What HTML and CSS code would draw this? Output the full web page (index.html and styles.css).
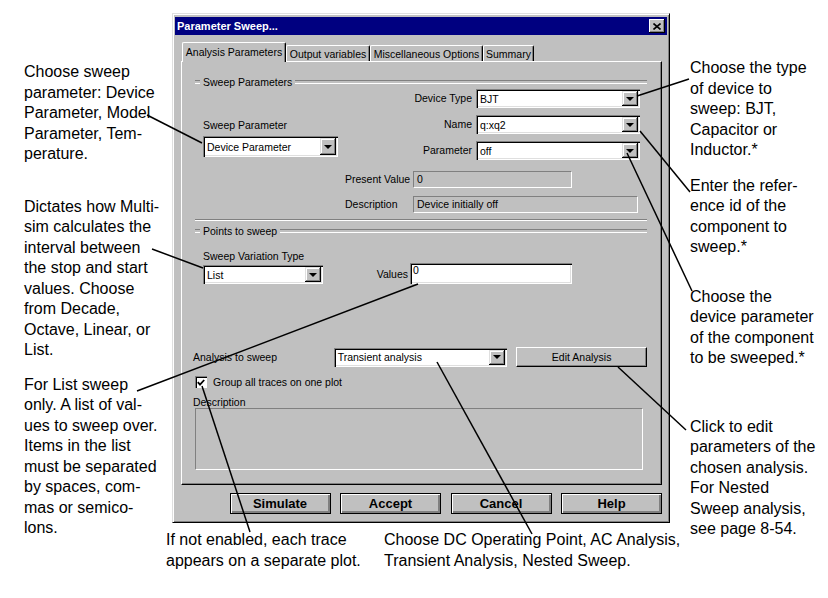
FILE: index.html
```html
<!DOCTYPE html>
<html lang="en">

<head>
    <meta charset="UTF-8">
    <title>Parameter Sweep</title>
    <link rel="stylesheet" href="styles.css">
</head>

<body>
    <div class="sheet">
        <div class="notes notes-left">
            <p class="note note-sweep">Choose sweep<br>parameter: Device<br>Parameter, Model<br>Parameter, Tem-<br>perature.</p>
            <p class="note note-dictates">Dictates how Multi-<br>sim calculates the<br>interval between<br>the stop and start<br>values. Choose<br>from Decade,<br>Octave, Linear, or<br>List.</p>
            <p class="note note-list">For List sweep<br>only. A list of val-<br>ues to sweep over.<br>Items in the list<br>must be separated<br>by spaces, com-<br>mas or semico-<br>lons.</p>
        </div>

        <div class="middle">
            <div class="dialog">
                <div class="titlebar">
                    <span>Parameter Sweep...</span>
                    <span class="close">
                        <svg width="8" height="7" viewBox="0 0 8 7">
                            <path d="M0.5 0.5 L7.5 6.5 M7.5 0.5 L0.5 6.5" stroke="#000" stroke-width="1.6" fill="none"/>
                        </svg>
                    </span>
                </div>

                <div class="tabs">
                    <div class="tab tab-analysis active">Analysis Parameters</div>
                    <div class="tab tab-output">Output variables</div>
                    <div class="tab tab-misc">Miscellaneous Options</div>
                    <div class="tab tab-summary">Summary</div>
                </div>

                <div class="panel">
                    <div class="group-head first"><span>Sweep Parameters</span></div>

                    <div class="sweep-top">
                        <div class="sweep-left">
                            <div class="lbl">Sweep Parameter</div>
                            <div class="combo combo-param"><span>Device Parameter</span><i class="arrow"></i></div>
                        </div>
                        <div class="sweep-right">
                            <span class="lbl">Device Type</span>
                            <div class="combo"><span>BJT</span><i class="arrow"></i></div>
                            <span class="lbl">Name</span>
                            <div class="combo"><span>q:xq2</span><i class="arrow"></i></div>
                            <span class="lbl">Parameter</span>
                            <div class="combo"><span>off</span><i class="arrow"></i></div>
                        </div>
                    </div>

                    <div class="readouts">
                        <span class="lbl">Present Value</span>
                        <div class="readout readout-short">0</div>
                        <span class="lbl">Description</span>
                        <div class="readout readout-long">Device initially off</div>
                    </div>

                    <div class="sep"></div>
                    <div class="group-head second"><span>Points to sweep</span></div>

                    <div class="points">
                        <div class="points-left">
                            <div class="lbl">Sweep Variation Type</div>
                            <div class="combo combo-list"><span>List</span><i class="arrow"></i></div>
                        </div>
                        <span class="lbl values-lbl">Values</span>
                        <div class="field">0</div>
                    </div>

                    <div class="analysis">
                        <div class="analysis-row">
                            <span class="lbl analysis-lbl">Analysis to sweep</span>
                            <div class="combo combo-analysis"><span>Transient analysis</span><i class="arrow"></i></div>
                            <div class="btn-edit">Edit Analysis</div>
                        </div>
                        <div class="check-row">
                            <span class="check">
                                <svg width="8" height="7" viewBox="0 0 8 7">
                                    <path d="M0.8 3.2 L3 5.6 L7.2 1" stroke="#000" stroke-width="1.8" fill="none"/>
                                </svg>
                            </span>
                            <span class="lbl">Group all traces on one plot</span>
                        </div>
                        <div class="lbl desc-lbl">Description</div>
                        <div class="desc-box"></div>
                    </div>
                </div>

                <div class="actions">
                    <div class="btn">Simulate</div>
                    <div class="btn">Accept</div>
                    <div class="btn">Cancel</div>
                    <div class="btn">Help</div>
                </div>
            </div>

            <div class="captions">
                <p class="note caption-trace">If not enabled, each trace<br>appears on a separate plot.</p>
                <p class="note">Choose DC Operating Point, AC Analysis,<br>Transient Analysis, Nested Sweep.</p>
            </div>
        </div>

        <div class="notes notes-right">
            <p class="note note-type">Choose the type<br>of device to<br>sweep: BJT,<br>Capacitor or<br>Inductor.*</p>
            <p class="note note-ref">Enter the refer-<br>ence id of the<br>component to<br>sweep.*</p>
            <p class="note note-param">Choose the<br>device parameter<br>of the component<br>to be sweeped.*</p>
            <p class="note note-edit">Click to edit<br>parameters of the<br>chosen analysis.<br>For Nested<br>Sweep analysis,<br>see page 8-54.</p>
        </div>

        <svg class="leaders" width="828" height="598" viewBox="0 0 828 598">
            <g stroke="#000" stroke-width="1.5" fill="none">
                <line x1="147" y1="115" x2="202" y2="143"/>
                <line x1="152" y1="249" x2="203" y2="268"/>
                <line x1="137" y1="391" x2="418" y2="284"/>
                <line x1="689" y1="79" x2="637" y2="96"/>
                <line x1="640" y1="131" x2="690" y2="192"/>
                <line x1="627" y1="153" x2="692" y2="291"/>
                <line x1="618" y1="367" x2="686" y2="430"/>
                <line x1="202" y1="386" x2="250" y2="532"/>
                <line x1="437" y1="362" x2="532" y2="534"/>
            </g>
        </svg>
    </div>
</body>

</html>
```

FILE: styles.css
```css
* {
    box-sizing: border-box;
    padding: 0;
    margin: 0;
}

body {
    background: #fff;
    color: #000;
    font-family: "Liberation Sans", Arial, sans-serif;
}

.sheet {
    position: relative;
    width: 828px;
    height: 598px;
    display: grid;
    grid-template-columns: 172px 498px 158px;
    overflow: hidden;
}

/* callout text */

.note {
    font-size: 16px;
    line-height: 20.5px;
    white-space: nowrap;
}

.notes-left {
    padding-left: 24px;
    padding-top: 62px;
}

.note-dictates {
    margin-top: 32px;
}

.note-list {
    margin-top: 14px;
}

.notes-right {
    padding-left: 20px;
    padding-top: 58px;
}

.note-ref {
    margin-top: 15px;
}

.note-param {
    margin-top: 29px;
}

.note-edit {
    margin-top: 48px;
}

.captions {
    display: flex;
    margin-top: 7px;
    margin-left: -6px;
}

.caption-trace {
    width: 218px;
    flex-shrink: 0;
}

.leaders {
    position: absolute;
    top: 0;
    left: 0;
    pointer-events: none;
}

/* dialog window */

.dialog {
    height: 510px;
    margin-top: 13px;
    background: #c0c0c0;
    border: 1px solid;
    border-color: #dfdfdf #000 #000 #dfdfdf;
    box-shadow: inset 1px 1px #fff, inset -1px -1px #808080;
    padding: 3px 2px 2px 2px;
    display: flex;
    flex-direction: column;
    font-size: 10.5px;
}

.titlebar {
    height: 18px;
    background: #000080;
    color: #fff;
    font-weight: bold;
    font-size: 11px;
    display: flex;
    align-items: center;
    justify-content: space-between;
    padding: 0 2px;
}

.close {
    width: 16px;
    height: 14px;
    background: #c0c0c0;
    box-shadow: inset -1px -1px #000, inset 1px 1px #fff, inset -2px -2px #808080;
    display: flex;
    align-items: center;
    justify-content: center;
}

.tabs {
    display: flex;
    align-items: flex-end;
    margin-top: 7px;
    padding-left: 7px;
}

.tab {
    height: 16px;
    border: 1px solid;
    border-bottom: none;
    border-color: #fff #000 #fff #fff;
    border-radius: 2px 2px 0 0;
    box-shadow: inset -1px 0 #808080;
    display: flex;
    align-items: center;
    justify-content: center;
    white-space: nowrap;
}

.tab.active {
    height: 20px;
    margin-bottom: -1px;
    background: #c0c0c0;
    position: relative;
    z-index: 1;
    padding-bottom: 2px;
}

.tab-analysis {
    width: 104px;
}

.tab-output {
    width: 84px;
}

.tab-misc {
    width: 113px;
}

.tab-summary {
    width: 51px;
}

.panel {
    height: 424px;
    margin: 0 5px 0 6px;
    border: 1px solid;
    border-color: #fff #000 #000 #fff;
    box-shadow: inset -1px -1px #808080;
    padding: 0 14px 14px 13px;
    display: flex;
    flex-direction: column;
}

.lbl {
    line-height: 13px;
    white-space: nowrap;
}

.group-head {
    height: 12px;
    display: flex;
    align-items: center;
}

.group-head::before,
.group-head::after {
    content: "";
    height: 2px;
    border-top: 1px solid #808080;
    border-bottom: 1px solid #fff;
}

.group-head::before {
    width: 5px;
}

.group-head::after {
    flex: 1;
}

.group-head span {
    padding: 0 3px;
}

.group-head.first {
    margin-top: 14px;
}

.group-head.second {
    margin-top: 4px;
}

.sep {
    height: 2px;
    margin-top: 6px;
    border-top: 1px solid #808080;
    border-bottom: 1px solid #fff;
}

/* combo boxes */

.combo {
    height: 19px;
    background: #fff;
    box-shadow: inset 1px 1px #808080, inset 2px 2px #000, inset -1px -1px #fff, inset -2px -2px #dfdfdf;
    padding: 2px;
    display: flex;
    align-items: stretch;
}

.combo span {
    flex: 1;
    padding-left: 2px;
    display: flex;
    align-items: center;
    white-space: nowrap;
}

.arrow {
    width: 16px;
    background: #c0c0c0;
    box-shadow: inset -1px -1px #000, inset 1px 1px #dfdfdf, inset -2px -2px #808080, inset 2px 2px #fff;
    display: flex;
    align-items: center;
    justify-content: center;
}

.arrow::after {
    content: "";
    border-left: 4px solid transparent;
    border-right: 4px solid transparent;
    border-top: 4px solid #000;
}

.sweep-top {
    display: flex;
    margin-top: 1px;
}

.sweep-left {
    margin-left: 8px;
    padding-top: 30px;
}

.combo-param {
    width: 135px;
    height: 21px;
    margin-top: 4px;
}

.sweep-right {
    margin-left: auto;
    margin-right: 7px;
    display: grid;
    grid-template-columns: auto 164px;
    column-gap: 4px;
    row-gap: 7px;
    align-items: center;
    justify-items: end;
}

.sweep-right .combo {
    justify-self: stretch;
}

/* read-only values */

.readouts {
    display: grid;
    grid-template-columns: 68px auto;
    row-gap: 8px;
    align-items: center;
    padding-left: 150px;
    margin-top: 11px;
}

.readout {
    height: 17px;
    line-height: 14px;
    padding-left: 3px;
    border: 1px solid;
    border-color: #808080 #fff #fff #808080;
}

.readout-short {
    width: 159px;
}

.readout-long {
    width: 225px;
}

/* points to sweep */

.points {
    display: flex;
    align-items: flex-end;
}

.points-left {
    margin-left: 8px;
    padding-top: 13px;
}

.combo-list {
    width: 120px;
    margin-top: 2px;
}

.values-lbl {
    width: 85px;
    text-align: right;
    margin-right: 2px;
    margin-bottom: 3px;
}

.field {
    width: 162px;
    height: 21px;
    background: #fff;
    box-shadow: inset 1px 1px #808080, inset 2px 2px #000, inset -1px -1px #fff, inset -2px -2px #dfdfdf;
    padding: 1px 3px;
    line-height: 13px;
}

/* analysis */

.analysis {
    margin-top: auto;
}

.analysis-row {
    display: flex;
    align-items: center;
    height: 20px;
}

.analysis-lbl {
    width: 141px;
    margin-left: -2px;
}

.combo-analysis {
    width: 174px;
}

.btn-edit {
    width: 131px;
    height: 20px;
    margin-left: 9px;
    border: 1px solid;
    border-color: #fff #000 #000 #fff;
    box-shadow: inset -1px -1px #808080;
    display: flex;
    align-items: center;
    justify-content: center;
}

.check-row {
    display: flex;
    align-items: center;
    margin-top: 9px;
    height: 12px;
}

.check {
    width: 12px;
    height: 12px;
    background: #fff;
    box-shadow: inset 1px 1px #808080, inset 2px 2px #000, inset -1px -1px #fff;
    display: flex;
    align-items: center;
    justify-content: center;
    margin-right: 6px;
}

.desc-lbl {
    margin-top: 8px;
    margin-left: -2px;
    line-height: 12px;
}

.desc-box {
    width: 448px;
    height: 62px;
    border: 1px solid;
    border-color: #808080 #fff #fff #808080;
}

/* bottom buttons */

.actions {
    display: flex;
    justify-content: flex-end;
    gap: 9.5px;
    margin-top: 8px;
    padding-right: 5px;
}

.btn {
    width: 101px;
    height: 21px;
    border: 1px solid #000;
    box-shadow: inset 1px 1px #fff, inset -1px -1px #808080, inset -2px -2px #808080;
    font-weight: bold;
    font-size: 13px;
    display: flex;
    align-items: center;
    justify-content: center;
}
```
